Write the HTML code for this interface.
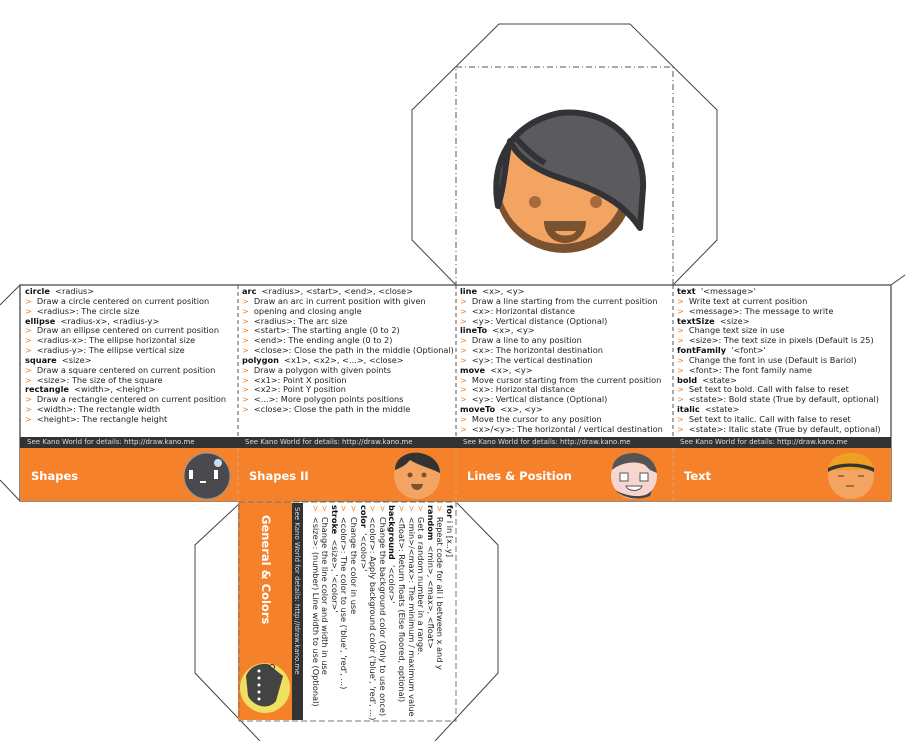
<!DOCTYPE html>
<html><head><meta charset="utf-8"><style>
body{margin:0;width:915px;height:741px;overflow:hidden;background:#fff;position:relative;font-family:"DejaVu Sans","Liberation Sans",sans-serif;}
.abs{position:absolute}
.col{position:absolute;top:287px;font-size:8.2px;line-height:9.85px;color:#222;white-space:nowrap}
.col b{color:#111}
.o{color:#f5822a;margin-right:5px}
.bar{position:absolute;top:437px;height:11px;background:#333;color:#ddd;font-size:7px;line-height:11px;padding-left:7px;white-space:nowrap}
.or{position:absolute;top:448px;height:53px;background:#f5822a}
.tt{position:absolute;top:469px;color:#fff;font-weight:bold;font-size:11.5px;font-family:"DejaVu Sans",sans-serif}
</style></head><body>
<svg class="abs" style="left:0;top:0" width="915" height="741">
<polyline points="456,285 412,240 412,110 499,24 630,24 717,110 717,240 673,285" fill="none" stroke="#444" stroke-width="1"/>
<rect x="456" y="67" width="217" height="218" fill="none" stroke="#555" stroke-dasharray="6,3,1,3"/>
<polyline points="20,285 0,305" stroke="#444" fill="none"/>
<polyline points="0,480 20,501" stroke="#444" fill="none"/>
<polyline points="891,285 905,275" stroke="#444" fill="none"/>
<polyline points="240,503 195,545 195,673 260,741" fill="none" stroke="#444"/>
<polyline points="457,503 498,545 498,673 435,741" fill="none" stroke="#444"/>
<rect x="20" y="285" width="871" height="216" fill="none" stroke="#666" stroke-width="1.5"/>
<line x1="238" y1="285" x2="238" y2="501" stroke="#555" stroke-dasharray="4,3"/>
<line x1="456" y1="285" x2="456" y2="501" stroke="#555" stroke-dasharray="4,3"/>
<line x1="673" y1="285" x2="673" y2="501" stroke="#555" stroke-dasharray="4,3"/>
<line x1="20" y1="285" x2="20" y2="501" stroke="#555" stroke-dasharray="4,3"/>
<g transform="translate(0,13)">
<circle cx="564" cy="170" r="70" fill="#7a5230"/>
<circle cx="562" cy="168" r="63" fill="#f4a462"/>
<path d="M498,193 C490,150 510,110 560,100 C610,95 645,130 643,175 L640,215 C620,185 590,175 560,165 C530,155 515,140 510,128 C505,150 505,170 498,193Z" fill="#5b5b5e" stroke="#333236" stroke-width="6" stroke-linejoin="round"/>
<path d="M513,122 C525,135 535,145 545,150" stroke="#333236" stroke-width="6" fill="none"/>
<circle cx="535" cy="189" r="6" fill="#a86a3c"/>
<circle cx="596" cy="189" r="6" fill="#a86a3c"/>
<path d="M544,208 L586,208 C586,222 576,230 565,230 C554,230 544,222 544,208Z" fill="#7a5230"/>
<path d="M555,218 L576,218 C574,224 557,224 555,218Z" fill="#f4a462"/>
</g>
</svg>

<div class="col" style="left:25px">
<b>circle</b> &nbsp;&lt;radius&gt;<br><span class="o">&gt;</span>Draw a circle centered on current position<br><span class="o">&gt;</span>&lt;radius&gt;: The circle size<br>
<b>ellipse</b> &nbsp;&lt;radius-x&gt;, &lt;radius-y&gt;<br><span class="o">&gt;</span>Draw an ellipse centered on current position<br><span class="o">&gt;</span>&lt;radius-x&gt;: The ellipse horizontal size<br><span class="o">&gt;</span>&lt;radius-y&gt;: The ellipse vertical size<br>
<b>square</b> &nbsp;&lt;size&gt;<br><span class="o">&gt;</span>Draw a square centered on current position<br><span class="o">&gt;</span>&lt;size&gt;: The size of the square<br>
<b>rectangle</b> &nbsp;&lt;width&gt;, &lt;height&gt;<br><span class="o">&gt;</span>Draw a rectangle centered on current position<br><span class="o">&gt;</span>&lt;width&gt;: The rectangle width<br><span class="o">&gt;</span>&lt;height&gt;: The rectangle height
</div>
<div class="col" style="left:242px">
<b>arc</b> &nbsp;&lt;radius&gt;, &lt;start&gt;, &lt;end&gt;, &lt;close&gt;<br><span class="o">&gt;</span>Draw an arc in current position with given<br><span class="o">&gt;</span>opening and closing angle<br><span class="o">&gt;</span>&lt;radius&gt;: The arc size<br><span class="o">&gt;</span>&lt;start&gt;: The starting angle (0 to 2)<br><span class="o">&gt;</span>&lt;end&gt;: The ending angle (0 to 2)<br><span class="o">&gt;</span>&lt;close&gt;: Close the path in the middle (Optional)<br>
<b>polygon</b> &nbsp;&lt;x1&gt;, &lt;x2&gt;, &lt;...&gt;, &lt;close&gt;<br><span class="o">&gt;</span>Draw a polygon with given points<br><span class="o">&gt;</span>&lt;x1&gt;: Point X position<br><span class="o">&gt;</span>&lt;x2&gt;: Point Y position<br><span class="o">&gt;</span>&lt;...&gt;: More polygon points positions<br><span class="o">&gt;</span>&lt;close&gt;: Close the path in the middle
</div>
<div class="col" style="left:460px">
<b>line</b> &nbsp;&lt;x&gt;, &lt;y&gt;<br><span class="o">&gt;</span>Draw a line starting from the current position<br><span class="o">&gt;</span>&lt;x&gt;: Horizontal distance<br><span class="o">&gt;</span>&lt;y&gt;: Vertical distance (Optional)<br>
<b>lineTo</b> &nbsp;&lt;x&gt;, &lt;y&gt;<br><span class="o">&gt;</span>Draw a line to any position<br><span class="o">&gt;</span>&lt;x&gt;: The horizontal destination<br><span class="o">&gt;</span>&lt;y&gt;: The vertical destination<br>
<b>move</b> &nbsp;&lt;x&gt;, &lt;y&gt;<br><span class="o">&gt;</span>Move cursor starting from the current position<br><span class="o">&gt;</span>&lt;x&gt;: Horizontal distance<br><span class="o">&gt;</span>&lt;y&gt;: Vertical distance (Optional)<br>
<b>moveTo</b> &nbsp;&lt;x&gt;, &lt;y&gt;<br><span class="o">&gt;</span>Move the cursor to any position<br><span class="o">&gt;</span>&lt;x&gt;/&lt;y&gt;: The horizontal / vertical destination
</div>
<div class="col" style="left:677px">
<b>text</b> &nbsp;'&lt;message&gt;'<br><span class="o">&gt;</span>Write text at current position<br><span class="o">&gt;</span>&lt;message&gt;: The message to write<br>
<b>textSize</b> &nbsp;&lt;size&gt;<br><span class="o">&gt;</span>Change text size in use<br><span class="o">&gt;</span>&lt;size&gt;: The text size in pixels (Default is 25)<br>
<b>fontFamily</b> &nbsp;'&lt;font&gt;'<br><span class="o">&gt;</span>Change the font in use (Default is Bariol)<br><span class="o">&gt;</span>&lt;font&gt;: The font family name<br>
<b>bold</b> &nbsp;&lt;state&gt;<br><span class="o">&gt;</span>Set text to bold. Call with false to reset<br><span class="o">&gt;</span>&lt;state&gt;: Bold state (True by default, optional)<br>
<b>italic</b> &nbsp;&lt;state&gt;<br><span class="o">&gt;</span>Set text to italic. Call with false to reset<br><span class="o">&gt;</span>&lt;state&gt;: Italic state (True by default, optional)
</div>

<div class="bar" style="left:20px;width:211px">See Kano World for details: http://draw.kano.me</div>
<div class="bar" style="left:238px;width:211px">See Kano World for details: http://draw.kano.me</div>
<div class="bar" style="left:456px;width:210px">See Kano World for details: http://draw.kano.me</div>
<div class="bar" style="left:673px;width:211px">See Kano World for details: http://draw.kano.me</div>
<div class="or" style="left:20px;width:871px"></div>
<svg class="abs" style="left:0;top:448px" width="915" height="53">
<line x1="238" y1="0" x2="238" y2="53" stroke="#e0a070" stroke-dasharray="4,3"/>
<line x1="456" y1="0" x2="456" y2="53" stroke="#e0a070" stroke-dasharray="4,3"/>
<line x1="673" y1="0" x2="673" y2="53" stroke="#e0a070" stroke-dasharray="4,3"/>
<circle cx="207" cy="28" r="23" fill="#4a4a4e" stroke="#999" stroke-width="1"/>
<rect x="189" y="22" width="4" height="9" fill="#fff"/><rect x="214" y="22" width="4" height="9" fill="#fff"/><rect x="200" y="33" width="6" height="2" fill="#fff"/>
<circle cx="218" cy="15" r="4" fill="#cde"/>
<circle cx="417" cy="28" r="23" fill="#f4a462"/>
<path d="M395,22 C395,8 410,3 420,5 C432,7 440,15 440,25 C430,20 420,18 410,12 C405,18 400,20 395,22Z" fill="#333"/>
<circle cx="410" cy="27" r="2.5" fill="#7a5230"/><circle cx="424" cy="27" r="2.5" fill="#7a5230"/>
<path d="M411,36 L423,36 C422,44 412,44 411,36Z" fill="#7a5230"/>
<circle cx="634" cy="28" r="23" fill="#f8d6d0"/>
<path d="M612,22 C613,8 625,5 635,5 C648,6 656,15 657,25 L650,22 L645,17 C635,12 620,15 612,22Z" fill="#555"/>
<rect x="620" y="25" width="8" height="8" fill="#fff" stroke="#555"/><rect x="640" y="25" width="8" height="8" fill="#fff" stroke="#555"/>
<path d="M626,38 L642,38 C640,44 628,44 626,38Z" fill="#fff" stroke="#555"/>
<path d="M615,42 C625,48 645,52 652,42 L650,48 C640,52 625,52 615,42Z" fill="#444"/>
<circle cx="851" cy="28" r="23" fill="#f4a462"/>
<path d="M828,22 C830,8 842,5 852,5 C864,5 872,12 874,22 Z" fill="#f0a020"/>
<path d="M828,24 C840,17 860,17 874,24 L874,20 C860,14 840,14 828,20Z" fill="#333"/>
<path d="M838,28 h6 M858,28 h6 M846,38 h8" stroke="#8a5a30" stroke-width="1.5"/>
</svg>
<div class="tt" style="left:31px">Shapes</div>
<div class="tt" style="left:249px">Shapes II</div>
<div class="tt" style="left:467px">Lines &amp; Position</div>
<div class="tt" style="left:684px">Text</div>

<div class="abs" style="left:238px;top:501px;width:54px;height:219px;background:#f5822a"></div>
<div class="abs" style="left:292px;top:503px;width:11px;height:217px;background:#333"></div>
<svg class="abs" style="left:238px;top:501px" width="220" height="222">
<rect x="1" y="1" width="217" height="219" fill="none" stroke="#777" stroke-dasharray="6,3"/>
<circle cx="27" cy="187" r="25" fill="#f0e060"/>
<path d="M8,175 C12,165 22,162 30,163 L45,175 L38,200 C30,210 15,205 10,195Z" fill="#444"/>
<g fill="#fff"><circle cx="21" cy="170" r="1.5"/><circle cx="21" cy="177" r="1.5"/><circle cx="21" cy="184" r="1.5"/><circle cx="21" cy="191" r="1.5"/><circle cx="21" cy="198" r="1.5"/></g>
<circle cx="34" cy="166" r="2.5" fill="none" stroke="#333"/>
</svg>
<div class="abs" style="left:273px;top:515px;transform:rotate(90deg);transform-origin:0 0;color:#fff;font-weight:bold;font-size:11.5px;white-space:nowrap">General &amp; Colors</div>
<div class="abs" style="left:301px;top:507px;transform:rotate(90deg);transform-origin:0 0;color:#ddd;font-size:7px;white-space:nowrap">See Kano World for details: http://draw.kano.me</div>
<div class="col" style="left:454px;top:505px;transform:rotate(90deg);transform-origin:0 0;line-height:9.6px">
<b>for</b> i in [x..y]<br><span class="o">&gt;</span>Repeat code for all i between x and y<br>
<b>random</b> &nbsp;&lt;min&gt;, &lt;max&gt;, &lt;float&gt;<br><span class="o">&gt;</span>Get a random number in a range.<br><span class="o">&gt;</span>&lt;min&gt;/&lt;max&gt;: The minimum / maximum value<br><span class="o">&gt;</span>&lt;float&gt;: Return floats (Else floored, optional)<br>
<b>background</b> &nbsp;'&lt;color&gt;'<br><span class="o">&gt;</span>Change the background color (Only to use once)<br><span class="o">&gt;</span>&lt;color&gt;: Apply background color ('blue', 'red', ...)<br>
<b>color</b> &nbsp;'&lt;color&gt;'<br><span class="o">&gt;</span>Change the color in use<br><span class="o">&gt;</span>&lt;color&gt;: The color to use ('blue', 'red', ...)<br>
<b>stroke</b> &nbsp;&lt;size&gt;, '&lt;color&gt;'<br><span class="o">&gt;</span>Change the line color and width in use<br><span class="o">&gt;</span>&lt;size&gt;: (number) Line width to use (Optional)
</div>
</body></html>
